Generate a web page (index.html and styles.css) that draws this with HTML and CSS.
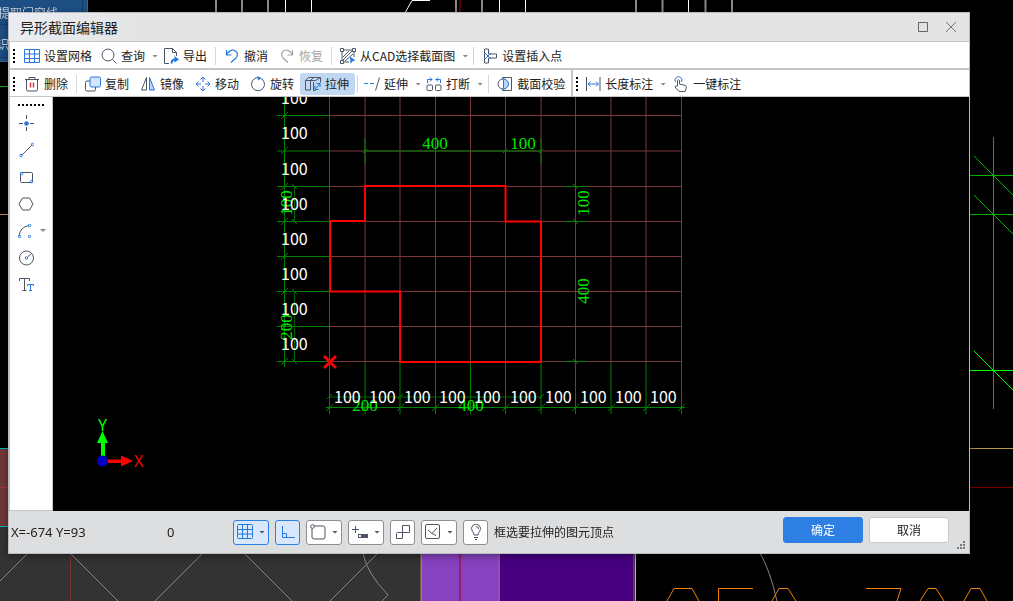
FILE: index.html
```html
<!DOCTYPE html>
<html lang="zh-CN">
<head>
<meta charset="utf-8">
<title>异形截面编辑器</title>
<link rel="stylesheet" href="styles.css">
</head>
<body>
<svg class="backdrop" aria-hidden="true">
  <rect width="88" height="62" fill="#1d4f84"/>
  <path d="M0 24.500H82M0 57.500H82M82.500 0V62" stroke="#173d68"/>
  <path d="M0 61.500H88M87.500 0V62" stroke="#2a67a5"/>
  <text x="-2" y="18" class="ribbon-text">提取门窗线</text>
  <text x="-3" y="49" class="ribbon-text">识</text>
  <path d="M216 0V12M242 0V12M268 0V12M456 0V12M482 0V12M636 0V12M662.500 0V12M705.500 0V12M732 0V12" stroke="#8a8a8a" stroke-width="2"/>
  <path d="M285.500 0V12M311.500 0V12M499.500 0V12M525.500 0V12M688.500 0V12M405 13L412 .5H430" stroke="#fff" fill="none"/>
  <path d="M460 0V12" stroke="#500" stroke-width="2"/>
  <path d="M0 86.500H8" stroke="#00b400"/>
  <path d="M0 214.500H8M970 448.500H2000" stroke="#b8964a"/>
  <rect y="448" width="8" height="79" fill="#703838"/>
  <path d="M0 448.500H8M0 526.500H8" stroke="#0bb"/>
  <path d="M0 487.500H8" stroke="#a33"/>
  <rect y="527" width="420" height="2000" fill="#333"/>
  <path d="M28 553L0 581M70 553L118 601M203 553L155 601M244 553L292 601M378 553L330 601M363 553Q366 572 388 595L382 601M760 553Q770 570 777 601" stroke="#888" fill="none"/>
  <path d="M70.500 553V2000" stroke="#7d3030"/>
  <rect x="421" y="554" width="79" height="2000" fill="#8742c0"/>
  <rect x="500" y="554" width="134" height="2000" fill="#460080"/>
  <path d="M460 554V2000" stroke="#9b1f66" stroke-width="2"/>
  <path d="M499 554V2000M634 554V2000" stroke="#a45cb0"/>
  <path d="M421 554V2000M635.500 554V2000" stroke="#d8ac68"/>
  <path d="M667 601L674 588.500H692L699 601M718.500 601V588.500H753M772 601L779 588.500H788L796 601M866 588.500H901L897 601M920 601L928 588.500H936L944 601M964 601L971 588.500H980L987 601" stroke="#f08000" fill="none"/>
  <path d="M993.500 137V409M970 175.500H2000M970 214.500H2000" stroke="#00b400"/>
  <path d="M974 156L1013 195M974 195L1013 234" stroke="#00b400"/>
  <path d="M970 370.500H2000M974 351L1013 390" stroke="#0f0"/>
  <path d="M970 487.500H2000" stroke="#700"/>
</svg>

<main class="dialog">
  <header class="titlebar">
    <h1 class="title">异形截面编辑器</h1>
    <button class="window-button" aria-label="最大化"><svg class="icon" viewBox="0 0 16 16"><path d="M3.500 3.500h9v9h-9z" stroke="#666"/></svg></button>
    <button class="window-button" aria-label="关闭"><svg class="icon" viewBox="0 0 16 16"><path d="M3 3l10 10M13 3L3 13" stroke="#777"/></svg></button>
  </header>

  <div class="toolbar" role="toolbar" aria-label="常用">
    <span class="grip"></span>
    <button class="tool"><svg class="icon blue" viewBox="0 0 16 16"><path d="M.5 1.500h15v13H.5zM.5 6h15M.5 10.500h15M5.500 1.500v13M10.500 1.500v13"/></svg>设置网格</button>
    <button class="tool drop snug"><svg class="icon" viewBox="0 0 16 16"><circle cx="7" cy="7" r="6"/><path d="M11.500 11.500l4 4"/></svg>查询<span class="arrow"></span></button>
    <button class="tool"><svg class="icon" viewBox="0 0 16 16"><path d="M6 15.500H1.500V.5h8l4 4V8M9.500.5v4h4"/><path d="M8.500 15.500c0-3 1-4 4-4" class="b" stroke-width="2"/><path d="M11.500 8l4.500 3.500-4.500 3z" class="bf"/></svg>导出</button>
    <span class="sep"></span>
    <button class="tool"><svg class="icon blue" viewBox="0 0 16 16"><path d="M2.500 2v5h5M2.500 7C5 2 9 1 11.500 3c2.500 2 2 5 .5 7l-5 4.500" stroke-width="1.200"/></svg>撤消</button>
    <button class="tool off" disabled><svg class="icon" viewBox="0 0 16 16"><path d="M13.500 2v5h-5M13.500 7C11 2 7 1 4.500 3c-2.500 2-2 5-.5 7l5 4.500" stroke-width="1.200"/></svg>恢复</button>
    <span class="sep"></span>
    <button class="tool drop"><svg class="icon" viewBox="0 0 16 16"><path d="M2 3v10M3 2h10M14 3v6M3 14h6M.5.5h3v3h-3zM12.500.5h3v3h-3zM.5 12.500h3v3h-3zM3 9l6-6M3 12l9-9M5 13l8-7"/><path d="M10 8.500l5.500 4-2.500.5-2.500 2.500z" class="bf"/></svg>从CAD选择截面图<span class="arrow"></span></button>
    <span class="sep"></span>
    <button class="tool"><svg class="icon" viewBox="0 0 16 16"><path d="M2.500 1v14h4v-5h8V6h-8V1z"/><path d="M3 5l6 6M9 5l-6 6" class="b"/></svg>设置插入点</button>
  </div>

  <div class="toolbar last" role="toolbar" aria-label="编辑">
    <span class="grip"></span>
    <button class="tool"><svg class="icon" viewBox="0 0 16 16"><path d="M1 3.500h14M5 3.500v-2h6v2M2.500 3.500v10q0 1.500 1.500 1.500h8q1.500 0 1.500-1.500v-10"/><path d="M6.500 6.500v5M9.500 6.500v5" stroke="#e03b3b" stroke-width="1.500"/></svg>删除</button>
    <span class="sep"></span>
    <button class="tool"><svg class="icon" viewBox="0 0 16 16"><path d="M5 5H2Q.5 5 .5 6.500v7Q.5 15 2 15h7q1.500 0 1.500-1.500V11"/><rect x="5" y="1" width="10.500" height="10" rx="1.500" class="b" fill="#d5e5fa"/></svg>复制</button>
    <button class="tool"><svg class="icon" viewBox="0 0 16 16"><path d="M6.500 1.500v12.500h-5z"/><path d="M9.500 1.500v12.500h5z" class="b" fill="#b9d6f8"/></svg>镜像</button>
    <button class="tool"><svg class="icon blue" viewBox="0 0 16 16"><path d="M8 1v5M8 10v5M1 8h5M10 8h5M5.500 3.500L8 1l2.500 2.500M5.500 12.500L8 15l2.500-2.500M3.500 5.500L1 8l2.500 2.500M12.500 5.500L15 8l-2.500 2.500"/></svg>移动</button>
    <button class="tool"><svg class="icon" viewBox="0 0 16 16"><path d="M5 2.500a6.500 6.500 0 1 0 6 0"/><path d="M5 2.500a6.500 6.500 0 0 1 4-1"/><path d="M7.500 0l4 2-3.500 2.500z" class="bf"/></svg>旋转</button>
    <button class="tool on" aria-pressed="true"><svg class="icon" viewBox="0 0 16 16"><path d="M.5 4.500v9.500h5V4.500zM.5 4.500l3-3h12v5M5.500 4.500l3-3M5.500 4.500h5l5-3M8.500 6v8.500h2"/><path d="M10 13.500l5-6M11.500 7.500H15v3.500M10 9.500v4h3.500" class="b"/></svg>拉伸</button>
    <span class="sep"></span>
    <button class="tool drop snug"><svg class="icon" viewBox="0 0 16 16"><path d="M15.500 1.500l-4 13"/><path d="M0 7.500h4M6 7.500h4" class="b"/></svg>延伸<span class="arrow"></span></button>
    <button class="tool drop"><svg class="icon" viewBox="0 0 16 16"><rect x="1" y="9" width="5.500" height="5.500" rx="1"/><rect x="9.500" y="9" width="5.500" height="5.500" rx="1"/><path d="M1.500 7V3.500H6M4 1.500l2 2-2 2M14.500 7V3.500H10M12 1.500l-2 2 2 2" class="b"/></svg>打断<span class="arrow"></span></button>
    <span class="sep"></span>
    <button class="tool"><svg class="icon" viewBox="0 0 16 16"><path d="M5.500 3V1.500h9v13h-9V13"/><circle cx="6" cy="8" r="5"/><path d="M6.500 3a5 5 0 0 1 0 10z" class="b" fill="#b9d6f8"/></svg>截面校验</button>
    <span class="divider"></span>
    <span class="grip"></span>
    <button class="tool drop snug"><svg class="icon" viewBox="0 0 16 16"><path d="M1.500 1v14M15 1v14"/><path d="M3 8h10.500M5.500 5.500L3 8l2.500 2.500M11 5.500L13.500 8 11 10.500" class="b"/></svg>长度标注<span class="arrow"></span></button>
    <button class="tool wide"><svg class="icon" viewBox="0 0 16 16"><path d="M2.500 6a3.500 3.500 0 1 1 6 0" class="b"/><path d="M4.500 10V4.500q1.200-1.500 2 0V8l6 1.500q1.500 1 .5 3.500l-1 2.500H6L2 11q0-1.500 2.500-1"/></svg>一键标注</button>
  </div>

  <div class="workspace">
    <nav class="palette" aria-label="绘图工具">
      <span class="grip-h"></span>
      <button class="draw" aria-label="点"><svg class="icon" viewBox="0 0 16 16"><path d="M8.500 0v4M8.500 12v4M1 8.500h4M12 8.500h4"/><circle cx="8.500" cy="8.500" r="2.300" class="bf"/></svg></button>
      <button class="draw" aria-label="直线"><svg class="icon" viewBox="0 0 16 16"><path d="M4 13L14 3"/><circle cx="3" cy="13.500" r="1.200" class="b"/><circle cx="14.500" cy="2.500" r="1.200" class="b"/></svg></button>
      <button class="draw" aria-label="矩形"><svg class="icon" viewBox="0 0 16 16"><rect x="2.500" y="3.500" width="12" height="10" rx="1"/><circle cx="3.500" cy="4.500" r="1.200" class="b"/><circle cx="13.500" cy="12.500" r="1.200" class="b"/></svg></button>
      <button class="draw" aria-label="多边形"><svg class="icon" viewBox="0 0 16 16"><path d="M4.500 2h7l3.500 6-3.500 6h-7L1 8z"/></svg></button>
      <button class="draw" aria-label="圆弧"><svg class="icon" viewBox="0 0 16 16"><path d="M1 13Q2 4 11 2.500"/><circle cx="1.500" cy="13.500" r="1.200" class="b"/><circle cx="11.500" cy="2.500" r="1.200" class="b"/><circle cx="11.500" cy="13.500" r="1.200" class="b"/></svg><span class="arrow"></span></button>
      <button class="draw" aria-label="圆"><svg class="icon" viewBox="0 0 16 16"><circle cx="8.500" cy="8" r="7"/><path d="M9.500 7l4-3.500"/><circle cx="8.500" cy="8" r="1.200" class="b"/></svg></button>
      <button class="draw" aria-label="文字"><svg class="icon" viewBox="0 0 16 16"><path d="M1.500 4V1.500h10V4M6.500 1.500v12M4.500 13.500h4"/><path d="M9.500 9V7.500h6V9M12.500 7.500v6M11 13.500h3" class="b"/></svg></button>
    </nav>

    <svg class="canvas" viewBox="53 97 916 414" preserveAspectRatio="xMinYMin meet" role="img" aria-label="截面图">
      <path class="grid" d="M329.500 97V361M365 97V361M400 97V361M435.500 97V361M470.500 97V361M505.500 97V361M541 97V361M575.500 97V361M611 97V361M646 97V361M681.500 97V362M330 115.500H681M330 151H681M330 186.500H681M330 221.500H681M330 256.500H681M330 291.500H681M330 326.500H681M330 361.500H681"/>
      <g class="dim">
        <path d="M284.500 97V367M277 115.500H329M277 151H329M277 186.500H329M277 221.500H329M277 256.500H329M277 291.500H329M277 326.500H329M277 361.500H329"/>
        <path d="M326 407.500H685M329.500 362V414M365 362V414M400 362V414M435.500 362V414M470.500 362V414M505.500 362V414M541 362V414M575.500 362V414M611 362V414M646 362V414M681.500 362V414"/>
        <path d="M281 119l7-7M281 154l7-7M281 190l7-7M281 225l7-7M281 260l7-7M281 295l7-7M281 330l7-7M281 365l7-7M326 411l7-7M362 411l7-7M397 411l7-7M432 411l7-7M467 411l7-7M502 411l7-7M538 411l7-7M572 411l7-7M608 411l7-7M643 411l7-7M678 411l7-7"/>
        <path d="M365 151H541M365 138V164M505.500 138V164M541 138V164M575.500 186V362M563 186.500H588M563 221.500H588M563 361.500H588"/>
        <path d="M363 153l4-4M503 153l4-4M539 153l4-4M573 184l5 5M573 219l5 5M573 359l5 5M292 184l5 5M292 219l5 5M292 289l5 5M292 359l5 5M327 399l5-5M398 399l5-5M539 399l5-5"/>
      </g>
      <path class="dim-soft" d="M294.500 186V222M294.500 291V362M329 397H541"/>
      <g class="size">
        <text x="435" y="149">400</text>
        <text x="523" y="149">100</text>
        <text x="365" y="411">200</text>
        <text x="471" y="411">400</text>
        <text transform="translate(589 203) rotate(-90)">100</text>
        <text transform="translate(589 291) rotate(-90)">400</text>
        <text transform="translate(292 203) rotate(-90)">100</text>
        <text transform="translate(292 327) rotate(-90)">200</text>
      </g>
      <g class="step">
        <text x="281" y="104">100</text><text x="281" y="139">100</text><text x="281" y="175">100</text><text x="281" y="210">100</text>
        <text x="281" y="245">100</text><text x="281" y="280">100</text><text x="281" y="315">100</text><text x="281" y="350">100</text>
        <text x="334" y="403">100</text><text x="369" y="403">100</text><text x="404" y="403">100</text><text x="439" y="403">100</text><text x="474" y="403">100</text>
        <text x="510" y="403">100</text><text x="545" y="403">100</text><text x="580" y="403">100</text><text x="615" y="403">100</text><text x="650" y="403">100</text>
      </g>
      <path class="outline" d="M365 186H505.500V221.500H541V362H400V291.500H330V221H365z"/>
      <path d="M324 356l12 12M336 356l-12 12" stroke="red" stroke-width="3"/>
      <path d="M101 456V443H97L102.500 431 108 443H105V456z" fill="#0f0"/>
      <path d="M108 459.500H121V455.500L133 461 121 466.500V463H108z" fill="red"/>
      <circle cx="102.500" cy="461" r="5.500" fill="#0000c0"/>
      <text x="98" y="431" class="axis" fill="#0f0">Y</text>
      <text x="134" y="467" class="axis" fill="red">X</text>
    </svg>
  </div>

  <footer class="statusbar">
    <output class="coords">X=-674 Y=93</output>
    <output class="value">0</output>
    <div class="toggles">
      <button class="toggle drop on" aria-label="网格"><svg class="icon blue" viewBox="0 0 16 16"><rect x=".5" y=".5" width="15" height="14" rx="1"/><path d="M.5 5.500h15M.5 10h15M5.500.5v14M10.500.5v14"/></svg><span class="arrow"></span></button>
      <button class="toggle on" aria-label="正交"><svg class="icon blue" viewBox="0 0 16 16"><path d="M2.500 2v11.500H15M2.500 9.500h4v4"/></svg></button>
      <button class="toggle drop" aria-label="对象捕捉"><svg class="icon" viewBox="0 0 16 16"><rect x="2" y="2" width="13" height="13" rx="2"/><circle cx="2.500" cy="2.500" r="1.800" fill="#fff"/></svg><span class="arrow"></span></button>
      <button class="toggle drop" aria-label="动态输入"><svg class="icon" viewBox="0 0 16 16"><path d="M0 5.500h7M3.500 2v7"/><rect x="6.500" y="10.500" width="9" height="3"/><path d="M9 12h6.500" stroke-width="3"/></svg><span class="arrow"></span></button>
      <button class="toggle" aria-label="复制模式"><svg class="icon" viewBox="0 0 16 16"><path d="M7.500 1.500h7v7h-7zM1.500 9.500q0-1 1-1h5v6h-6z"/></svg></button>
      <button class="toggle drop" aria-label="极轴"><svg class="icon" viewBox="0 0 16 16"><rect x=".5" y=".5" width="14" height="14" rx="1.500"/><path d="M3 6l4 3.500L12 4M7 9.500l4 2"/></svg><span class="arrow"></span></button>
      <button class="toggle" aria-label="提示"><svg class="icon" viewBox="0 0 16 16"><path d="M6 11Q6 9 4.500 7.500a4.500 4.500 0 1 1 7 0Q10 9 10 11zM6 13.500h4M7 15.500h2M8 2.500a2.500 2.500 0 0 1 2.500 2.500"/></svg></button>
    </div>
    <p class="hint">框选要拉伸的图元顶点</p>
    <div class="actions">
      <button class="action primary">确定</button>
      <button class="action">取消</button>
    </div>
    <svg class="sizer" viewBox="0 0 8 8" aria-hidden="true"><path d="M6 0h2v2H6zM3 3h2v2H3zM6 3h2v2H6zM0 6h2v2H0zM3 6h2v2H3zM6 6h2v2H6z" fill="#777b80"/></svg>
  </footer>
</main>
</body>
</html>
```
FILE: styles.css
```css
* {
  box-sizing: border-box;
}

body {
  margin: 0;
  min-height: 100vh;
  padding: 12px 43px 47px 8px;
  display: flex;
  background: #000;
  color: #222;
  font: 12px/16px "Noto Sans CJK SC", sans-serif;
}

button {
  margin: 0;
  padding: 0;
  border: 0;
  background: none;
  color: inherit;
  font: inherit;
}

.backdrop {
  position: fixed;
  inset: 0;
  width: 100%;
  height: 100%;
}

.ribbon-text {
  fill: #c3cfdd;
}

.dialog {
  position: relative;
  flex: 1;
  display: flex;
  flex-direction: column;
  border: 1px solid #b9bcc0;
  background: #dddee0;
  box-shadow: 0 2px 8px rgba(0, 0, 0, 0.4);
}

.titlebar {
  display: flex;
  align-items: center;
  height: 29px;
  padding: 0 10px 0 11px;
  border-bottom: 1px solid #c2c5c9;
  background: linear-gradient(90deg, #e9edf2, #e3e3e3 15%);
}

.title {
  flex: 1;
  margin: 0;
  font-size: 14px;
  font-weight: 400;
  line-height: 20px;
}

.window-button {
  display: flex;
  margin-left: 12px;
}

.icon {
  display: block;
  flex: none;
  width: 16px;
  height: 16px;
  fill: none;
  stroke: #4d5566;
}

.icon.blue,
.icon .b {
  stroke: #2478e0;
}

.icon .bf {
  fill: #2478e0;
  stroke: none;
}

.toolbar {
  display: flex;
  align-items: center;
  padding: 3px 0 1px 4px;
  border-left: 1px solid #c2c5c9;
  border-bottom: 2px solid #c2c5c9;
  background: #fff;
}

.toolbar.last {
  border-bottom-width: 1px;
}

.grip {
  width: 2px;
  height: 14px;
  margin: 0 4px 0 -1px;
  background: repeating-linear-gradient(#000 0 2px, transparent 2px 4px);
}

.tool {
  display: flex;
  align-items: center;
  gap: 4px;
  height: 22px;
  padding: 0 6px 0 5px;
  border-radius: 3px;
  white-space: nowrap;
}

.tool.drop {
  padding-right: 0;
}

.tool.snug {
  padding-left: 3px;
}

.tool.on {
  background: #c0d8f2;
}

.tool.off {
  color: #a5a5a5;
}

.tool.off .icon {
  stroke: #a5a5a5;
}

.tool.wide {
  padding-left: 7px;
}

.arrow {
  flex: none;
  width: 6px;
  height: 3px;
  background: #888;
  clip-path: polygon(0 0, 100% 0, 50% 100%);
}

.tool .arrow {
  margin-left: 3px;
}

.sep {
  width: 1px;
  height: 18px;
  margin: 0 3px 0 2px;
  background: #d5d5d5;
}

.drop + .sep {
  margin-left: 5px;
}

.divider {
  align-self: stretch;
  width: 2px;
  margin: -3px 4px -1px 0;
  background: #c2c5c9;
}

.workspace {
  flex: 1;
  display: flex;
  min-height: 0;
  border-left: 1px solid #c2c5c9;
  background: #000;
}

.palette {
  flex: none;
  width: 43px;
  padding: 7px 0 0 8px;
  border-right: 1px solid #c2c5c9;
  border-bottom: 1px solid #c2c5c9;
  background: #fff;
}

.grip-h {
  display: block;
  width: 26px;
  height: 2px;
  margin-bottom: 3px;
  background: repeating-linear-gradient(90deg, #000 0 2px, transparent 2px 4px);
}

.draw {
  display: flex;
  align-items: center;
  gap: 6px;
  width: 100%;
  height: 27px;
}

.canvas {
  flex: 1;
  min-width: 0;
  background: #000;
}

.grid {
  fill: none;
  stroke: #7b373c;
}

.dim {
  fill: none;
  stroke: #008200;
}

.dim-soft {
  fill: none;
  stroke: #006400;
}

.size {
  fill: #00e600;
  font: 17px "Liberation Serif", serif;
  text-anchor: middle;
}

.step {
  fill: #fff;
  font: 16px "Noto Sans CJK SC", sans-serif;
}

.axis {
  font: 16px "Noto Sans", sans-serif;
}

.outline {
  fill: none;
  stroke: #f00;
  stroke-width: 2;
}

.statusbar {
  position: relative;
  display: flex;
  align-items: center;
  height: 42px;
  padding: 0 20px 0 2px;
}

.coords,
.value {
  font: 13px/18px "Noto Sans", sans-serif;
}

.coords {
  width: 156px;
}

.value {
  width: 66px;
}

.toggles {
  display: flex;
  gap: 6px;
}

.toggle {
  display: flex;
  align-items: center;
  justify-content: center;
  width: 25px;
  height: 25px;
  border: 1px solid #8f8f8f;
  border-radius: 3px;
  background: #fff;
}

.toggle.drop {
  justify-content: space-between;
  width: 36px;
  padding: 0 3px;
}

.toggle.on {
  border-color: #2f80e4;
  background: #d9e7fb;
}

.toggle .arrow {
  background: #4d5566;
}

.hint {
  flex: 1;
  margin: 0 0 0 6px;
}

.actions {
  display: flex;
  gap: 6px;
  padding-bottom: 4px;
}

.action {
  width: 80px;
  height: 26px;
  border: 1px solid #c8c8c8;
  border-radius: 3px;
  background: #fff;
}

.action.primary {
  border-color: #2d7fe3;
  background: #2d7fe3;
  color: #fff;
}

.sizer {
  position: absolute;
  right: 4px;
  bottom: 4px;
  width: 8px;
  height: 8px;
}
```
